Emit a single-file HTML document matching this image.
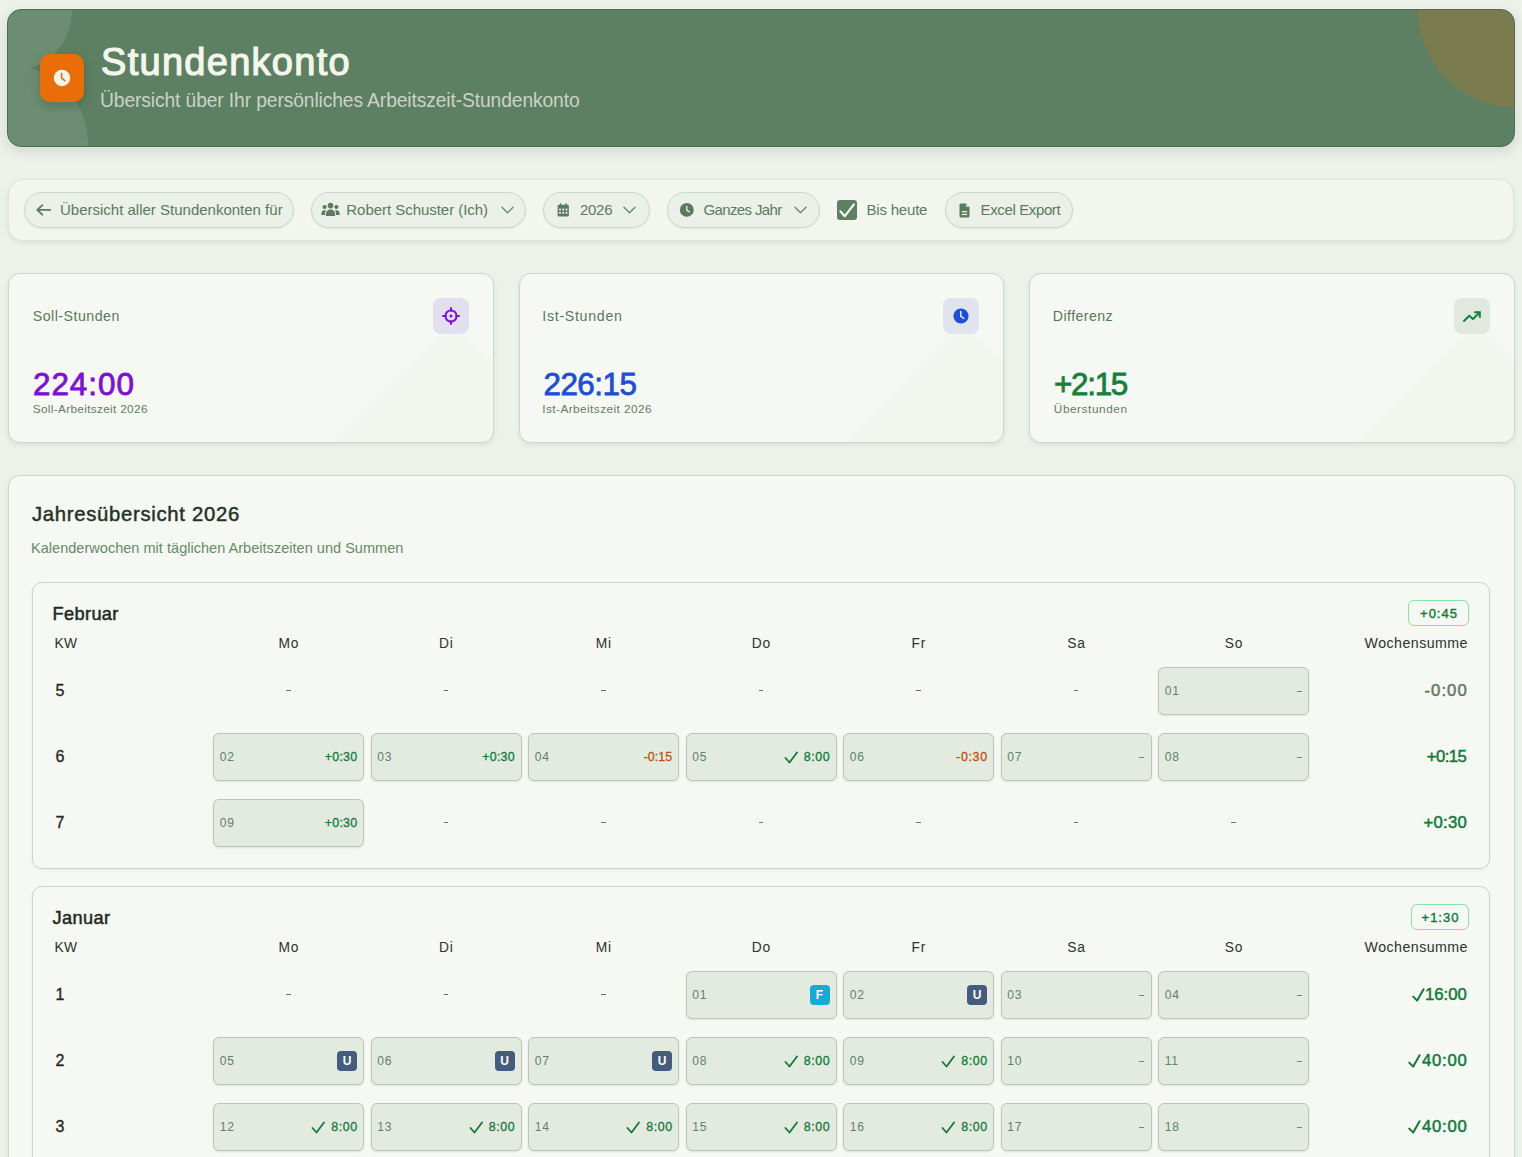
<!DOCTYPE html><html><head><meta charset="utf-8"><title>Stundenkonto</title><style>
*{box-sizing:border-box;margin:0;padding:0}
html,body{width:1522px;height:1157px;overflow:hidden}
body{background:#ecf1ea;font-family:"Liberation Sans",sans-serif;position:relative}
.t{position:absolute;line-height:1;white-space:nowrap}
.abs{position:absolute}
.header{position:absolute;left:7px;top:9px;width:1508px;height:138px;border-radius:14px;background:#5c8061;border:1px solid #4b6e50;overflow:hidden;box-shadow:0 4px 12px rgba(40,60,40,0.14), 0 0 0 1px rgba(255,255,255,0.35)}
.bar{position:absolute;left:8px;top:179px;width:1506px;height:62px;border-radius:15px;background:#f2f6ef;border:1px solid #dfe6db;box-shadow:0 2px 4px rgba(60,80,60,0.10)}
.pill{position:absolute;top:192px;height:36px;border-radius:18px;background:#ebf0e8;border:1px solid #cdd7c9;box-shadow:0 1px 2px rgba(60,80,60,0.08)}
.card{position:absolute;background:#f6f8f3;border:1px solid #cdd8c8;border-radius:12px;box-shadow:0 2px 4px rgba(60,80,60,0.10);overflow:hidden}
.ibox{position:absolute;width:36px;height:36px;border-radius:8px}
.mcard{position:absolute;left:32px;width:1458px;background:#f6f8f3;border:1px solid #cdd8c8;border-radius:10px;box-shadow:0 1px 3px rgba(60,80,60,0.08)}
.cell{position:absolute;width:151px;height:48px;background:#e3ebe0;border:1px solid #b9c8b6;border-radius:6px;box-shadow:0 1px 2px rgba(60,80,60,0.12)}
.badge{position:absolute;border:1px solid #86e3a6;border-radius:6px;background:#f6f8f3}
.ub{position:absolute;width:20px;height:20px;border-radius:4px;color:#fff;font-weight:700;font-size:12px;line-height:20px;text-align:center}
</style></head><body>
<div class="header"><div class="abs" style="left:0;top:0;width:120px;height:59px;overflow:hidden"><div class="abs" style="left:-56px;top:-59px;width:120px;height:120px;border-radius:50%;background:rgba(255,255,255,0.10)"></div></div><div class="abs" style="left:0;top:59px;width:120px;height:100px;overflow:hidden"><div class="abs" style="left:-74px;top:-3px;width:154px;height:154px;border-radius:50%;background:rgba(255,255,255,0.10)"></div></div><div class="abs" style="left:1410px;top:-97px;width:194px;height:194px;border-radius:50%;background:rgba(234,108,10,0.22)"></div></div>
<div class="abs" style="left:40px;top:54px;width:44px;height:48px;border-radius:10px;background:#ea6d08;box-shadow:0 4px 10px rgba(30,50,30,0.25)"></div><svg class="abs" style="left:52px;top:68px" width="20" height="20" viewBox="0 0 20 20"><circle cx="10" cy="10" r="8.2" fill="#f2f5ec"/><path d="M9.6 5.2 V10.2 L12.8 12.6" stroke="#ea6d08" stroke-width="1.6" fill="none" stroke-linecap="round" stroke-linejoin="round"/></svg>
<div class="t" style="top:43.33px;font-size:38px;color:#f3f6ec;font-weight:400;letter-spacing:1.27px;-webkit-text-stroke:1.2px #f3f6ec;left:101.10px;">Stundenkonto</div>
<div class="t" style="top:90.96px;font-size:19.3px;color:#cad3c5;font-weight:400;letter-spacing:-0.126px;left:100.00px;">Übersicht über Ihr persönliches Arbeitszeit-Stundenkonto</div>
<div class="bar"></div>
<div class="pill" style="left:24px;width:270px"></div><div class="pill" style="left:311px;width:215px"></div><div class="pill" style="left:543px;width:107px"></div><div class="pill" style="left:667px;width:153px"></div><div class="pill" style="left:945px;width:128px"></div><svg class="abs" style="left:35px;top:202px" width="17" height="16" viewBox="0 0 17 16"><path d="M2.3 7.9 H15.2 M7.4 3.1 L2.3 7.9 L7.4 12.7" stroke="#5a7b5e" stroke-width="1.8" fill="none" stroke-linecap="round" stroke-linejoin="round"/></svg><div class="t" style="top:202.10px;font-size:15px;color:#5a7b5e;font-weight:400;left:60.00px;">Übersicht aller Stundenkonten für</div>
<svg class="abs" style="left:321px;top:202px" width="19" height="15" viewBox="0 0 19 15"><circle cx="9.5" cy="3.6" r="2.8" fill="#5a7b5e"/><circle cx="3.6" cy="5" r="2.1" fill="#5a7b5e"/><circle cx="15.4" cy="5" r="2.1" fill="#5a7b5e"/><path d="M4.8 14 C4.8 9.5 6.5 7.6 9.5 7.6 C12.5 7.6 14.2 9.5 14.2 14 Z" fill="#5a7b5e"/><path d="M0.3 13 C0.3 9.6 1.4 8.3 3.6 8.3 C4.3 8.3 4.8 8.5 5.1 8.8 C4.2 10 3.9 11.5 3.9 13 Z" fill="#5a7b5e"/><path d="M18.7 13 C18.7 9.6 17.6 8.3 15.4 8.3 C14.7 8.3 14.2 8.5 13.9 8.8 C14.8 10 15.1 11.5 15.1 13 Z" fill="#5a7b5e"/></svg><div class="t" style="top:202.10px;font-size:15px;color:#5a7b5e;font-weight:400;letter-spacing:-0.04px;left:346.30px;">Robert Schuster (Ich)</div>
<svg class="abs" style="left:500.5px;top:206.2px" width="13" height="9" viewBox="0 0 13 9"><path d="M1 1.3 L6.5 6.8 L12 1.3" stroke="#6a866c" stroke-width="1.3" fill="none" stroke-linecap="round" stroke-linejoin="round"/></svg><svg class="abs" style="left:556.5px;top:202.5px" width="12.5" height="14" viewBox="0 0 13 15"><rect x="0.5" y="2" width="12" height="12.5" rx="1.5" fill="#5a7b5e"/><rect x="2.8" y="0.3" width="1.6" height="3" rx="0.6" fill="#5a7b5e"/><rect x="8.6" y="0.3" width="1.6" height="3" rx="0.6" fill="#5a7b5e"/><g fill="#ebf0e8"><rect x="2" y="6" width="2" height="2"/><rect x="5.5" y="6" width="2" height="2"/><rect x="9" y="6" width="2" height="2"/><rect x="2" y="9.5" width="2" height="2"/><rect x="5.5" y="9.5" width="2" height="2"/><rect x="9" y="9.5" width="2" height="2"/></g></svg><div class="t" style="top:202.10px;font-size:15px;color:#5a7b5e;font-weight:400;letter-spacing:-0.28px;left:580.00px;">2026</div>
<svg class="abs" style="left:623.3px;top:206.2px" width="13" height="9" viewBox="0 0 13 9"><path d="M1 1.3 L6.5 6.8 L12 1.3" stroke="#6a866c" stroke-width="1.3" fill="none" stroke-linecap="round" stroke-linejoin="round"/></svg><svg class="abs" style="left:679px;top:202px" width="16" height="16" viewBox="0 0 16 16"><circle cx="7.8" cy="7.9" r="6.95" fill="#5a7b5e"/><path d="M7.8 4.3 V8.4 L10.5 9.9" stroke="#ebf0e8" stroke-width="1.3" fill="none" stroke-linecap="round"/></svg><div class="t" style="top:202.10px;font-size:15px;color:#5a7b5e;font-weight:400;letter-spacing:-0.645px;left:703.60px;">Ganzes Jahr</div>
<svg class="abs" style="left:793.5px;top:206.2px" width="13" height="9" viewBox="0 0 13 9"><path d="M1 1.3 L6.5 6.8 L12 1.3" stroke="#6a866c" stroke-width="1.3" fill="none" stroke-linecap="round" stroke-linejoin="round"/></svg><div class="abs" style="left:837px;top:200px;width:20px;height:20px;border-radius:3px;background:#5c8061"></div><svg class="abs" style="left:837px;top:200px" width="20" height="20" viewBox="0 0 20 20"><path d="M3.4 11.3 L7.8 16.2 L16.9 4.4" stroke="#f4f7f1" stroke-width="2.2" fill="none" stroke-linecap="round" stroke-linejoin="round"/></svg><div class="t" style="top:202.10px;font-size:15px;color:#5a7b5e;font-weight:400;letter-spacing:-0.2px;left:866.50px;">Bis heute</div>
<svg class="abs" style="left:959px;top:202.5px" width="11" height="15" viewBox="0 0 11 15"><path d="M1.5 0.5 H7 L10.5 4 V13 Q10.5 14.5 9 14.5 H2 Q0.5 14.5 0.5 13 V2 Q0.5 0.5 1.5 0.5 Z" fill="#5a7b5e"/><path d="M7 0.5 V4 H10.5" fill="#c9d4c6"/><rect x="2.8" y="8" width="5.4" height="1.3" fill="#ebf0e8"/><rect x="2.8" y="10.8" width="5.4" height="1.3" fill="#ebf0e8"/></svg><div class="t" style="top:202.10px;font-size:15px;color:#5a7b5e;font-weight:400;letter-spacing:-0.367px;left:980.50px;">Excel Export</div>
<div class="card" style="left:8px;top:273px;width:485.5px;height:169.5px"><div class="abs" style="left:345px;top:91px;width:200px;height:200px;transform:rotate(45deg);background:rgba(100,180,100,0.03)"></div></div><div class="ibox" style="left:433px;top:298px;background:#e2dff0"></div><svg class="abs" style="left:442px;top:307px" width="18" height="18" viewBox="0 0 18 18"><circle cx="9" cy="9" r="5.6" stroke="#7e0fd6" stroke-width="1.9" fill="none"/><circle cx="9" cy="9" r="1.5" fill="#7e0fd6"/><path d="M9 1 V4 M9 14 V17 M1 9 H4 M14 9 H17" stroke="#7e0fd6" stroke-width="1.9" stroke-linecap="round"/></svg><div class="t" style="top:308.88px;font-size:14.2px;color:#577a5b;font-weight:400;letter-spacing:0.477px;left:32.80px;">Soll-Stunden</div>
<div class="t" style="top:368.91px;font-size:31.4px;color:#7e0fd6;font-weight:400;letter-spacing:0.97px;-webkit-text-stroke:0.8px #7e0fd6;left:33.00px;">224:00</div>
<div class="t" style="top:403.91px;font-size:11.8px;color:#5f7e62;font-weight:400;letter-spacing:0.323px;left:32.80px;">Soll-Arbeitszeit 2026</div>
<div class="card" style="left:518.5px;top:273px;width:485.5px;height:169.5px"><div class="abs" style="left:345px;top:91px;width:200px;height:200px;transform:rotate(45deg);background:rgba(100,180,100,0.03)"></div></div><div class="ibox" style="left:943px;top:298px;background:#e0e4ef"></div><svg class="abs" style="left:952px;top:307px" width="18" height="18" viewBox="0 0 18 18"><circle cx="9" cy="9" r="7.6" fill="#1d4ed8"/><path d="M8.8 4.6 V9.4 L11.8 11.4" stroke="#e0e4ef" stroke-width="1.6" fill="none" stroke-linecap="round"/></svg><div class="t" style="top:308.88px;font-size:14.2px;color:#577a5b;font-weight:400;letter-spacing:0.703px;left:542.30px;">Ist-Stunden</div>
<div class="t" style="top:368.91px;font-size:31.4px;color:#1d4ed8;font-weight:400;letter-spacing:-0.53px;-webkit-text-stroke:0.8px #1d4ed8;left:543.50px;">226:15</div>
<div class="t" style="top:403.91px;font-size:11.8px;color:#5f7e62;font-weight:400;letter-spacing:0.431px;left:542.30px;">Ist-Arbeitszeit 2026</div>
<div class="card" style="left:1029px;top:273px;width:485.5px;height:169.5px"><div class="abs" style="left:345px;top:91px;width:200px;height:200px;transform:rotate(45deg);background:rgba(100,180,100,0.03)"></div></div><div class="ibox" style="left:1454px;top:298px;background:#e1e8df"></div><svg class="abs" style="left:1462px;top:307.7px" width="20" height="18" viewBox="0 0 20 18"><path d="M2 13 L7.3 7.7 L11 11 L17 5" stroke="#15803d" stroke-width="2" fill="none" stroke-linecap="round" stroke-linejoin="round"/><path d="M12.2 4.2 H17.8 V9.8" stroke="#15803d" stroke-width="2" fill="none" stroke-linecap="butt" stroke-linejoin="miter"/></svg><div class="t" style="top:308.88px;font-size:14.2px;color:#577a5b;font-weight:400;letter-spacing:0.422px;left:1052.80px;">Differenz</div>
<div class="t" style="top:368.91px;font-size:31.4px;color:#15803d;font-weight:400;letter-spacing:-1.29px;-webkit-text-stroke:0.8px #15803d;left:1054.00px;">+2:15</div>
<div class="t" style="top:403.91px;font-size:11.8px;color:#5f7e62;font-weight:400;letter-spacing:0.561px;left:1053.80px;">Überstunden</div>
<div class="card" style="left:7.5px;top:475px;width:1507.5px;height:720px;overflow:visible"></div>
<div class="t" style="top:503.61px;font-size:20.3px;color:#243226;font-weight:400;letter-spacing:0.7px;-webkit-text-stroke:0.45px #243226;left:32.00px;">Jahresübersicht 2026</div>
<div class="t" style="top:540.72px;font-size:14.5px;color:#648a6a;font-weight:400;letter-spacing:0.03px;left:31.00px;">Kalenderwochen mit täglichen Arbeitszeiten und Summen</div>
<div class="mcard" style="top:582.0px;height:287px"></div><div class="t" style="top:604.69px;font-size:18.2px;color:#1f2b21;font-weight:400;letter-spacing:0.35px;-webkit-text-stroke:0.5px #1f2b21;left:52.60px;">Februar</div>
<div class="badge" style="left:1408px;top:600.0px;width:61px;height:26px"></div><div class="t" style="top:606.69px;font-size:13px;color:#127a3a;font-weight:400;letter-spacing:1.0px;-webkit-text-stroke:0.4px #127a3a;left:1289.00px;width:300px;text-align:center;">+0:45</div>
<div class="t" style="top:636.82px;font-size:13.8px;color:#2a342b;font-weight:400;letter-spacing:0.4px;left:54.40px;">KW</div>
<div class="t" style="top:636.82px;font-size:13.8px;color:#2a342b;font-weight:400;letter-spacing:0.8px;left:138.90px;width:300px;text-align:center;">Mo</div>
<div class="t" style="top:636.82px;font-size:13.8px;color:#2a342b;font-weight:400;letter-spacing:0.8px;left:296.40px;width:300px;text-align:center;">Di</div>
<div class="t" style="top:636.82px;font-size:13.8px;color:#2a342b;font-weight:400;letter-spacing:0.8px;left:453.90px;width:300px;text-align:center;">Mi</div>
<div class="t" style="top:636.82px;font-size:13.8px;color:#2a342b;font-weight:400;letter-spacing:0.8px;left:611.40px;width:300px;text-align:center;">Do</div>
<div class="t" style="top:636.82px;font-size:13.8px;color:#2a342b;font-weight:400;letter-spacing:0.8px;left:768.90px;width:300px;text-align:center;">Fr</div>
<div class="t" style="top:636.82px;font-size:13.8px;color:#2a342b;font-weight:400;letter-spacing:0.8px;left:926.40px;width:300px;text-align:center;">Sa</div>
<div class="t" style="top:636.82px;font-size:13.8px;color:#2a342b;font-weight:400;letter-spacing:0.8px;left:1083.90px;width:300px;text-align:center;">So</div>
<div class="t" style="top:636.48px;font-size:14.2px;color:#2a342b;font-weight:400;letter-spacing:0.46px;right:54.04px;text-align:right;">Wochensumme</div>
<div class="t" style="top:683.15px;font-size:16px;color:#1f2b21;font-weight:400;-webkit-text-stroke:0.35px #1f2b21;left:55.40px;">5</div>
<div class="abs" style="left:286.3px;top:690.2px;width:4.4px;height:1px;background:#667766"></div><div class="abs" style="left:443.8px;top:690.2px;width:4.4px;height:1px;background:#667766"></div><div class="abs" style="left:601.3px;top:690.2px;width:4.4px;height:1px;background:#667766"></div><div class="abs" style="left:758.8px;top:690.2px;width:4.4px;height:1px;background:#667766"></div><div class="abs" style="left:916.3px;top:690.2px;width:4.4px;height:1px;background:#667766"></div><div class="abs" style="left:1073.8px;top:690.2px;width:4.4px;height:1px;background:#667766"></div><div class="cell" style="left:1158.0px;top:667.0px"></div><div class="t" style="top:684.75px;font-size:12.1px;color:#62806a;font-weight:400;letter-spacing:0.77px;left:1164.70px;">01</div>
<div class="abs" style="left:1296.5px;top:691.0px;width:5px;height:1px;background:#758a75"></div><div class="t" style="top:682.76px;font-size:16.7px;color:#5f7a62;font-weight:400;letter-spacing:1.06px;-webkit-text-stroke:0.5px #5f7a62;right:54.24px;text-align:right;">-0:00</div>
<div class="t" style="top:749.15px;font-size:16px;color:#1f2b21;font-weight:400;-webkit-text-stroke:0.35px #1f2b21;left:55.40px;">6</div>
<div class="cell" style="left:213.0px;top:733.0px"></div><div class="t" style="top:750.75px;font-size:12.1px;color:#62806a;font-weight:400;letter-spacing:0.77px;left:219.70px;">02</div>
<div class="t" style="top:751.30px;font-size:12.4px;color:#127a3a;font-weight:400;letter-spacing:0.25px;-webkit-text-stroke:0.3px #127a3a;right:1164.65px;text-align:right;">+0:30</div>
<div class="cell" style="left:370.5px;top:733.0px"></div><div class="t" style="top:750.75px;font-size:12.1px;color:#62806a;font-weight:400;letter-spacing:0.77px;left:377.20px;">03</div>
<div class="t" style="top:751.30px;font-size:12.4px;color:#127a3a;font-weight:400;letter-spacing:0.25px;-webkit-text-stroke:0.3px #127a3a;right:1007.15px;text-align:right;">+0:30</div>
<div class="cell" style="left:528.0px;top:733.0px"></div><div class="t" style="top:750.75px;font-size:12.1px;color:#62806a;font-weight:400;letter-spacing:0.77px;left:534.70px;">04</div>
<div class="t" style="top:751.30px;font-size:12.4px;color:#bf4f12;font-weight:400;letter-spacing:0.05px;-webkit-text-stroke:0.3px #bf4f12;right:849.85px;text-align:right;">-0:15</div>
<div class="cell" style="left:685.5px;top:733.0px"></div><div class="t" style="top:750.75px;font-size:12.1px;color:#62806a;font-weight:400;letter-spacing:0.77px;left:692.20px;">05</div>
<div class="t" style="top:751.30px;font-size:12.4px;color:#127a3a;font-weight:400;letter-spacing:0.6px;-webkit-text-stroke:0.3px #127a3a;right:691.80px;text-align:right;">8:00</div>
<svg class="abs" style="left:783.5px;top:751.4px" width="14" height="13" viewBox="0 0 14 13"><path d="M1.5 7 L5.5 11.5 L13 1.5" stroke="#127a3a" stroke-width="1.8" fill="none" stroke-linecap="round" stroke-linejoin="round"/></svg><div class="cell" style="left:843.0px;top:733.0px"></div><div class="t" style="top:750.75px;font-size:12.1px;color:#62806a;font-weight:400;letter-spacing:0.77px;left:849.70px;">06</div>
<div class="t" style="top:751.30px;font-size:12.4px;color:#bf4f12;font-weight:400;letter-spacing:0.7px;-webkit-text-stroke:0.3px #bf4f12;right:534.20px;text-align:right;">-0:30</div>
<div class="cell" style="left:1000.5px;top:733.0px"></div><div class="t" style="top:750.75px;font-size:12.1px;color:#62806a;font-weight:400;letter-spacing:0.77px;left:1007.20px;">07</div>
<div class="abs" style="left:1139.0px;top:757.0px;width:5px;height:1px;background:#758a75"></div><div class="cell" style="left:1158.0px;top:733.0px"></div><div class="t" style="top:750.75px;font-size:12.1px;color:#62806a;font-weight:400;letter-spacing:0.77px;left:1164.70px;">08</div>
<div class="abs" style="left:1296.5px;top:757.0px;width:5px;height:1px;background:#758a75"></div><div class="t" style="top:748.76px;font-size:16.7px;color:#127a3a;font-weight:400;letter-spacing:-0.59px;-webkit-text-stroke:0.5px #127a3a;right:55.89px;text-align:right;">+0:15</div>
<div class="t" style="top:815.15px;font-size:16px;color:#1f2b21;font-weight:400;-webkit-text-stroke:0.35px #1f2b21;left:55.40px;">7</div>
<div class="cell" style="left:213.0px;top:799.0px"></div><div class="t" style="top:816.75px;font-size:12.1px;color:#62806a;font-weight:400;letter-spacing:0.77px;left:219.70px;">09</div>
<div class="t" style="top:817.30px;font-size:12.4px;color:#127a3a;font-weight:400;letter-spacing:0.25px;-webkit-text-stroke:0.3px #127a3a;right:1164.65px;text-align:right;">+0:30</div>
<div class="abs" style="left:443.8px;top:822.2px;width:4.4px;height:1px;background:#667766"></div><div class="abs" style="left:601.3px;top:822.2px;width:4.4px;height:1px;background:#667766"></div><div class="abs" style="left:758.8px;top:822.2px;width:4.4px;height:1px;background:#667766"></div><div class="abs" style="left:916.3px;top:822.2px;width:4.4px;height:1px;background:#667766"></div><div class="abs" style="left:1073.8px;top:822.2px;width:4.4px;height:1px;background:#667766"></div><div class="abs" style="left:1231.3px;top:822.2px;width:4.4px;height:1px;background:#667766"></div><div class="t" style="top:814.76px;font-size:16.7px;color:#127a3a;font-weight:400;letter-spacing:0.26px;-webkit-text-stroke:0.5px #127a3a;right:55.04px;text-align:right;">+0:30</div>
<div class="mcard" style="top:886.0px;height:287px"></div><div class="t" style="top:908.69px;font-size:18.2px;color:#1f2b21;font-weight:400;letter-spacing:0.35px;-webkit-text-stroke:0.5px #1f2b21;left:52.60px;">Januar</div>
<div class="badge" style="left:1411px;top:904.0px;width:58px;height:26px"></div><div class="t" style="top:910.69px;font-size:13px;color:#127a3a;font-weight:400;letter-spacing:1.0px;-webkit-text-stroke:0.4px #127a3a;left:1290.50px;width:300px;text-align:center;">+1:30</div>
<div class="t" style="top:940.82px;font-size:13.8px;color:#2a342b;font-weight:400;letter-spacing:0.4px;left:54.40px;">KW</div>
<div class="t" style="top:940.82px;font-size:13.8px;color:#2a342b;font-weight:400;letter-spacing:0.8px;left:138.90px;width:300px;text-align:center;">Mo</div>
<div class="t" style="top:940.82px;font-size:13.8px;color:#2a342b;font-weight:400;letter-spacing:0.8px;left:296.40px;width:300px;text-align:center;">Di</div>
<div class="t" style="top:940.82px;font-size:13.8px;color:#2a342b;font-weight:400;letter-spacing:0.8px;left:453.90px;width:300px;text-align:center;">Mi</div>
<div class="t" style="top:940.82px;font-size:13.8px;color:#2a342b;font-weight:400;letter-spacing:0.8px;left:611.40px;width:300px;text-align:center;">Do</div>
<div class="t" style="top:940.82px;font-size:13.8px;color:#2a342b;font-weight:400;letter-spacing:0.8px;left:768.90px;width:300px;text-align:center;">Fr</div>
<div class="t" style="top:940.82px;font-size:13.8px;color:#2a342b;font-weight:400;letter-spacing:0.8px;left:926.40px;width:300px;text-align:center;">Sa</div>
<div class="t" style="top:940.82px;font-size:13.8px;color:#2a342b;font-weight:400;letter-spacing:0.8px;left:1083.90px;width:300px;text-align:center;">So</div>
<div class="t" style="top:940.48px;font-size:14.2px;color:#2a342b;font-weight:400;letter-spacing:0.46px;right:54.04px;text-align:right;">Wochensumme</div>
<div class="t" style="top:987.15px;font-size:16px;color:#1f2b21;font-weight:400;-webkit-text-stroke:0.35px #1f2b21;left:55.40px;">1</div>
<div class="abs" style="left:286.3px;top:994.2px;width:4.4px;height:1px;background:#667766"></div><div class="abs" style="left:443.8px;top:994.2px;width:4.4px;height:1px;background:#667766"></div><div class="abs" style="left:601.3px;top:994.2px;width:4.4px;height:1px;background:#667766"></div><div class="cell" style="left:685.5px;top:971.0px"></div><div class="t" style="top:988.75px;font-size:12.1px;color:#62806a;font-weight:400;letter-spacing:0.77px;left:692.20px;">01</div>
<div class="ub" style="left:809.5px;top:985.0px;background:#14acd4">F</div><div class="cell" style="left:843.0px;top:971.0px"></div><div class="t" style="top:988.75px;font-size:12.1px;color:#62806a;font-weight:400;letter-spacing:0.77px;left:849.70px;">02</div>
<div class="ub" style="left:967.0px;top:985.0px;background:#455c7f">U</div><div class="cell" style="left:1000.5px;top:971.0px"></div><div class="t" style="top:988.75px;font-size:12.1px;color:#62806a;font-weight:400;letter-spacing:0.77px;left:1007.20px;">03</div>
<div class="abs" style="left:1139.0px;top:995.0px;width:5px;height:1px;background:#758a75"></div><div class="cell" style="left:1158.0px;top:971.0px"></div><div class="t" style="top:988.75px;font-size:12.1px;color:#62806a;font-weight:400;letter-spacing:0.77px;left:1164.70px;">04</div>
<div class="abs" style="left:1296.5px;top:995.0px;width:5px;height:1px;background:#758a75"></div><div class="t" style="top:986.76px;font-size:16.7px;color:#127a3a;font-weight:400;-webkit-text-stroke:0.5px #127a3a;right:55.30px;text-align:right;">16:00</div>
<svg class="abs" style="left:1411.5px;top:988.0px" width="13" height="14" viewBox="0 0 13 14"><path d="M1.2 8.6 L5.2 12.6 L11.6 1.2" stroke="#127a3a" stroke-width="2" fill="none" stroke-linecap="round" stroke-linejoin="round"/></svg><div class="t" style="top:1053.15px;font-size:16px;color:#1f2b21;font-weight:400;-webkit-text-stroke:0.35px #1f2b21;left:55.40px;">2</div>
<div class="cell" style="left:213.0px;top:1037.0px"></div><div class="t" style="top:1054.75px;font-size:12.1px;color:#62806a;font-weight:400;letter-spacing:0.77px;left:219.70px;">05</div>
<div class="ub" style="left:337.0px;top:1051.0px;background:#455c7f">U</div><div class="cell" style="left:370.5px;top:1037.0px"></div><div class="t" style="top:1054.75px;font-size:12.1px;color:#62806a;font-weight:400;letter-spacing:0.77px;left:377.20px;">06</div>
<div class="ub" style="left:494.5px;top:1051.0px;background:#455c7f">U</div><div class="cell" style="left:528.0px;top:1037.0px"></div><div class="t" style="top:1054.75px;font-size:12.1px;color:#62806a;font-weight:400;letter-spacing:0.77px;left:534.70px;">07</div>
<div class="ub" style="left:652.0px;top:1051.0px;background:#455c7f">U</div><div class="cell" style="left:685.5px;top:1037.0px"></div><div class="t" style="top:1054.75px;font-size:12.1px;color:#62806a;font-weight:400;letter-spacing:0.77px;left:692.20px;">08</div>
<div class="t" style="top:1055.30px;font-size:12.4px;color:#127a3a;font-weight:400;letter-spacing:0.6px;-webkit-text-stroke:0.3px #127a3a;right:691.80px;text-align:right;">8:00</div>
<svg class="abs" style="left:783.5px;top:1055.4px" width="14" height="13" viewBox="0 0 14 13"><path d="M1.5 7 L5.5 11.5 L13 1.5" stroke="#127a3a" stroke-width="1.8" fill="none" stroke-linecap="round" stroke-linejoin="round"/></svg><div class="cell" style="left:843.0px;top:1037.0px"></div><div class="t" style="top:1054.75px;font-size:12.1px;color:#62806a;font-weight:400;letter-spacing:0.77px;left:849.70px;">09</div>
<div class="t" style="top:1055.30px;font-size:12.4px;color:#127a3a;font-weight:400;letter-spacing:0.6px;-webkit-text-stroke:0.3px #127a3a;right:534.30px;text-align:right;">8:00</div>
<svg class="abs" style="left:941.0px;top:1055.4px" width="14" height="13" viewBox="0 0 14 13"><path d="M1.5 7 L5.5 11.5 L13 1.5" stroke="#127a3a" stroke-width="1.8" fill="none" stroke-linecap="round" stroke-linejoin="round"/></svg><div class="cell" style="left:1000.5px;top:1037.0px"></div><div class="t" style="top:1054.75px;font-size:12.1px;color:#62806a;font-weight:400;letter-spacing:0.77px;left:1007.20px;">10</div>
<div class="abs" style="left:1139.0px;top:1061.0px;width:5px;height:1px;background:#758a75"></div><div class="cell" style="left:1158.0px;top:1037.0px"></div><div class="t" style="top:1054.75px;font-size:12.1px;color:#62806a;font-weight:400;letter-spacing:0.77px;left:1164.70px;">11</div>
<div class="abs" style="left:1296.5px;top:1061.0px;width:5px;height:1px;background:#758a75"></div><div class="t" style="top:1052.76px;font-size:16.7px;color:#127a3a;font-weight:400;letter-spacing:0.73px;-webkit-text-stroke:0.5px #127a3a;right:54.57px;text-align:right;">40:00</div>
<svg class="abs" style="left:1408.3px;top:1054.0px" width="13" height="14" viewBox="0 0 13 14"><path d="M1.2 8.6 L5.2 12.6 L11.6 1.2" stroke="#127a3a" stroke-width="2" fill="none" stroke-linecap="round" stroke-linejoin="round"/></svg><div class="t" style="top:1119.15px;font-size:16px;color:#1f2b21;font-weight:400;-webkit-text-stroke:0.35px #1f2b21;left:55.40px;">3</div>
<div class="cell" style="left:213.0px;top:1103.0px"></div><div class="t" style="top:1120.75px;font-size:12.1px;color:#62806a;font-weight:400;letter-spacing:0.77px;left:219.70px;">12</div>
<div class="t" style="top:1121.30px;font-size:12.4px;color:#127a3a;font-weight:400;letter-spacing:0.6px;-webkit-text-stroke:0.3px #127a3a;right:1164.30px;text-align:right;">8:00</div>
<svg class="abs" style="left:311.0px;top:1121.4px" width="14" height="13" viewBox="0 0 14 13"><path d="M1.5 7 L5.5 11.5 L13 1.5" stroke="#127a3a" stroke-width="1.8" fill="none" stroke-linecap="round" stroke-linejoin="round"/></svg><div class="cell" style="left:370.5px;top:1103.0px"></div><div class="t" style="top:1120.75px;font-size:12.1px;color:#62806a;font-weight:400;letter-spacing:0.77px;left:377.20px;">13</div>
<div class="t" style="top:1121.30px;font-size:12.4px;color:#127a3a;font-weight:400;letter-spacing:0.6px;-webkit-text-stroke:0.3px #127a3a;right:1006.80px;text-align:right;">8:00</div>
<svg class="abs" style="left:468.5px;top:1121.4px" width="14" height="13" viewBox="0 0 14 13"><path d="M1.5 7 L5.5 11.5 L13 1.5" stroke="#127a3a" stroke-width="1.8" fill="none" stroke-linecap="round" stroke-linejoin="round"/></svg><div class="cell" style="left:528.0px;top:1103.0px"></div><div class="t" style="top:1120.75px;font-size:12.1px;color:#62806a;font-weight:400;letter-spacing:0.77px;left:534.70px;">14</div>
<div class="t" style="top:1121.30px;font-size:12.4px;color:#127a3a;font-weight:400;letter-spacing:0.6px;-webkit-text-stroke:0.3px #127a3a;right:849.30px;text-align:right;">8:00</div>
<svg class="abs" style="left:626.0px;top:1121.4px" width="14" height="13" viewBox="0 0 14 13"><path d="M1.5 7 L5.5 11.5 L13 1.5" stroke="#127a3a" stroke-width="1.8" fill="none" stroke-linecap="round" stroke-linejoin="round"/></svg><div class="cell" style="left:685.5px;top:1103.0px"></div><div class="t" style="top:1120.75px;font-size:12.1px;color:#62806a;font-weight:400;letter-spacing:0.77px;left:692.20px;">15</div>
<div class="t" style="top:1121.30px;font-size:12.4px;color:#127a3a;font-weight:400;letter-spacing:0.6px;-webkit-text-stroke:0.3px #127a3a;right:691.80px;text-align:right;">8:00</div>
<svg class="abs" style="left:783.5px;top:1121.4px" width="14" height="13" viewBox="0 0 14 13"><path d="M1.5 7 L5.5 11.5 L13 1.5" stroke="#127a3a" stroke-width="1.8" fill="none" stroke-linecap="round" stroke-linejoin="round"/></svg><div class="cell" style="left:843.0px;top:1103.0px"></div><div class="t" style="top:1120.75px;font-size:12.1px;color:#62806a;font-weight:400;letter-spacing:0.77px;left:849.70px;">16</div>
<div class="t" style="top:1121.30px;font-size:12.4px;color:#127a3a;font-weight:400;letter-spacing:0.6px;-webkit-text-stroke:0.3px #127a3a;right:534.30px;text-align:right;">8:00</div>
<svg class="abs" style="left:941.0px;top:1121.4px" width="14" height="13" viewBox="0 0 14 13"><path d="M1.5 7 L5.5 11.5 L13 1.5" stroke="#127a3a" stroke-width="1.8" fill="none" stroke-linecap="round" stroke-linejoin="round"/></svg><div class="cell" style="left:1000.5px;top:1103.0px"></div><div class="t" style="top:1120.75px;font-size:12.1px;color:#62806a;font-weight:400;letter-spacing:0.77px;left:1007.20px;">17</div>
<div class="abs" style="left:1139.0px;top:1127.0px;width:5px;height:1px;background:#758a75"></div><div class="cell" style="left:1158.0px;top:1103.0px"></div><div class="t" style="top:1120.75px;font-size:12.1px;color:#62806a;font-weight:400;letter-spacing:0.77px;left:1164.70px;">18</div>
<div class="abs" style="left:1296.5px;top:1127.0px;width:5px;height:1px;background:#758a75"></div><div class="t" style="top:1118.76px;font-size:16.7px;color:#127a3a;font-weight:400;letter-spacing:0.73px;-webkit-text-stroke:0.5px #127a3a;right:54.57px;text-align:right;">40:00</div>
<svg class="abs" style="left:1408.3px;top:1120.0px" width="13" height="14" viewBox="0 0 13 14"><path d="M1.2 8.6 L5.2 12.6 L11.6 1.2" stroke="#127a3a" stroke-width="2" fill="none" stroke-linecap="round" stroke-linejoin="round"/></svg></body></html>
